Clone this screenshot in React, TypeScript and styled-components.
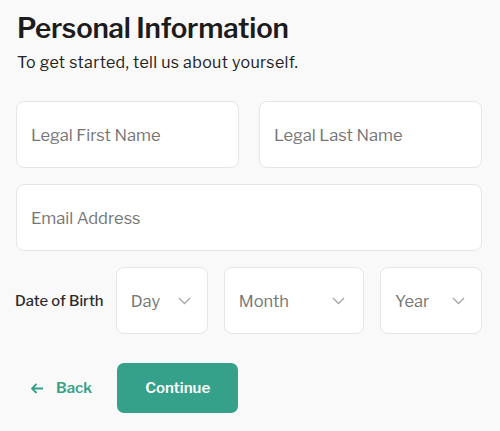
import React from "react";
import styled, { createGlobalStyle } from "styled-components";

const GlobalStyle = createGlobalStyle`
  html, body {
    margin: 0;
    padding: 0;
    background: #f9f9f9;
  }
  body {
    font-family: "Libre Franklin", "Open Sans", "Liberation Sans", sans-serif;
    color: #1f1f1f;
  }
`;

const Page = styled.div`
  width: 466px;
  padding: 11px 18px 16px 16px;
  display: flex;
  flex-direction: column;
`;

const Title = styled.h1`
  margin: 0 0 0 1px;
  font-size: 27.6px;
  font-weight: 600;
  line-height: 34px;
  letter-spacing: -0.2px;
  color: #1c1c1c;
`;

const Subtitle = styled.p`
  margin: 8px 0 0 1px;
  font-size: 16px;
  line-height: 20px;
  letter-spacing: 0.35px;
  color: #222;
`;

const Form = styled.div`
  margin-top: 28px;
  display: flex;
  flex-direction: column;
  gap: 16px;
`;

const Row = styled.div`
  display: flex;
  gap: 20px;
`;

const Field = styled.div`
  flex: 1 1 0;
  height: 67px;
  box-sizing: border-box;
  background: #fff;
  border: 1px solid #e6e6e6;
  border-radius: 8px;
  display: flex;
  align-items: center;
  padding: 0 14px;
  font-size: 16.5px;
  color: #767676;
`;

const DobRow = styled.div`
  display: flex;
  align-items: center;
  gap: 16px;
`;

const DobLabel = styled.span`
  width: 90px;
  margin-left: -1px;
  margin-right: -4px;
  font-size: 14.8px;
  font-weight: 500;
  color: #2a2a2a;
  white-space: nowrap;
`;

const Select = styled.div<{ $w: number; $pad: number }>`
  width: ${(p) => p.$w}px;
  height: 67px;
  box-sizing: border-box;
  background: #fff;
  border: 1px solid #e6e6e6;
  border-radius: 8px;
  display: flex;
  align-items: center;
  justify-content: space-between;
  padding: 0 ${(p) => p.$pad}px 0 14px;
  font-size: 16.5px;
  color: #767676;
`;

const Actions = styled.div`
  margin-top: 29px;
  display: flex;
  align-items: center;
  gap: 25px;
  padding-left: 15px;
`;

const BackLink = styled.button`
  background: none;
  border: none;
  padding: 0;
  display: flex;
  align-items: center;
  gap: 12px;
  font-family: inherit;
  font-size: 15px;
  font-weight: 600;
  color: #35a18a;
  cursor: pointer;
`;

const ContinueButton = styled.button`
  width: 121px;
  height: 50px;
  border: none;
  border-radius: 7px;
  background: #35a18a;
  color: #fff;
  font-family: inherit;
  font-size: 15px;
  font-weight: 600;
  cursor: pointer;
`;

const Chevron = () => (
  <svg width="13" height="8" viewBox="0 0 13 8" fill="none">
    <path d="M1 1l5.5 5.5L12 1" stroke="#a6a6a6" strokeWidth="1.3" />
  </svg>
);

const ArrowLeft = () => (
  <svg width="13" height="11" viewBox="0 0 13 11" fill="none">
    <path d="M12 5.5H1.5M5.5 1L1 5.5 5.5 10" stroke="#35a18a" strokeWidth="1.8" />
  </svg>
);

export default function App() {
  return (
    <>
      <GlobalStyle />
      <Page>
        <Title>Personal Information</Title>
        <Subtitle>To get started, tell us about yourself.</Subtitle>
        <Form>
          <Row>
            <Field>Legal First Name</Field>
            <Field>Legal Last Name</Field>
          </Row>
          <Row>
            <Field>Email Address</Field>
          </Row>
          <DobRow>
            <DobLabel>Date of Birth</DobLabel>
            <Select $w={93} $pad={16}>
              Day <Chevron />
            </Select>
            <Select $w={142} $pad={18}>
              Month <Chevron />
            </Select>
            <Select $w={103} $pad={16}>
              Year <Chevron />
            </Select>
          </DobRow>
        </Form>
        <Actions>
          <BackLink>
            <ArrowLeft />
            Back
          </BackLink>
          <ContinueButton>Continue</ContinueButton>
        </Actions>
      </Page>
    </>
  );
}
